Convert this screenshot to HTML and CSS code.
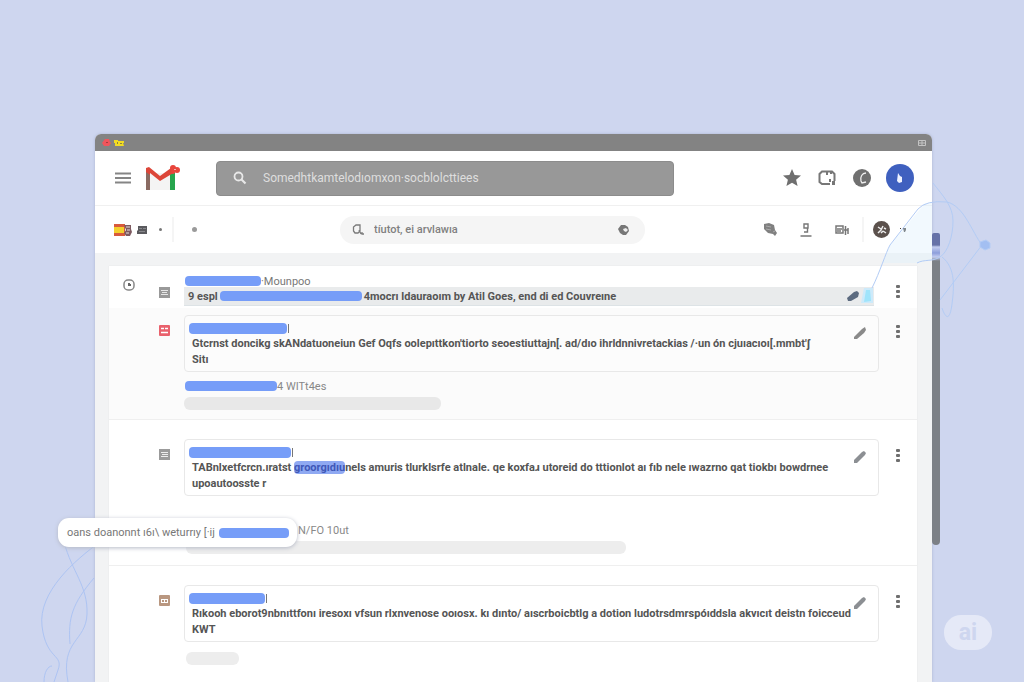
FILE: index.html
```html
<!DOCTYPE html>
<html lang="es">
<head>
<meta charset="utf-8">
<meta name="viewport" content="width=device-width, initial-scale=1">
<title>Mail</title>
<link rel="stylesheet" href="styles.css">
</head>
<body>
<svg class="waves" viewBox="0 0 80 140" aria-hidden="true">
  <path d="M70 0C45 18 8 50 12 84S34 112 28 128L24 140M34 0C42 30 58 44 57 72S30 98 38 140M64 36C42 62 38 76 40 102M14 140C14 130 18 124 22 124"/>
</svg>

<div class="window">
  <div class="titlebar">
    <svg class="lights" viewBox="0 0 24 8" aria-hidden="true">
      <path fill="#f0555c" d="M3 0h4l1 3 1 1-2 3H2L0 4z"/><path fill="#a33c40" d="M4 3h2v1H4z"/>
      <path fill="#f2dc22" d="M12 1h4v1h6v2h-1l1 3h-9V4h-1z"/><path fill="#8b843c" d="M15 3h1v2h-1zM18 4h2v1h-2z"/>
    </svg>
    <svg class="winbtn" viewBox="0 0 8 6" aria-hidden="true"><path d="M.5.5h7v5h-7zM.5 3h7M4 .5v5"/></svg>
  </div>

  <header class="header">
    <div class="brand">
      <button class="icon-btn" aria-label="Menu"><svg width="16" height="12" viewBox="0 0 16 12"><path d="M0 1.500h16M0 6h16M0 10.500h16" stroke="#858585" stroke-width="1.800"/></svg></button>
      <svg class="logo" viewBox="0 0 36 27" role="img" aria-label="Gmail">
        <path fill="#f4f4f4" d="M5 8h20v17H5z"/>
        <path fill="#8a6b62" d="M1 5l4 3v17H1z"/>
        <path fill="#27a54d" d="M25 9l5-2v18h-5z"/>
        <path fill="#dc4639" d="M1 7V3l3-1 11 9L26 3l4 4-15 9L5 8v2z"/>
        <circle cx="28" cy="3" r="3" fill="#e8453c"/><circle cx="32" cy="5" r="3" fill="#e8453c"/><circle cx="28" cy="7" r="2" fill="#e8453c"/><path fill="#f7b0a8" d="M29 4h2v1h-2z"/>
      </svg>
    </div>
    <form class="search">
      <svg width="14" height="14" viewBox="0 0 14 14" aria-hidden="true"><circle cx="5.500" cy="5.500" r="4" fill="none" stroke="#e8e8e8" stroke-width="1.800"/><path d="M8.500 8.500l4 4" stroke="#e8e8e8" stroke-width="2.200"/></svg>
      <input type="text" aria-label="Search mail" placeholder="Somedhtkamtelodıomxon·socblolcttiees">
    </form>
    <nav class="header-tools">
      <button class="icon-btn" aria-label="Starred"><svg width="18" height="18" viewBox="0 0 18 18"><path fill="#6f6f6f" d="M9 0l2.600 6 6.400.6-4.900 4.200L14.600 17 9 13.700 3.400 17l1.500-6.200L0 6.600 6.400 6z"/></svg></button>
      <button class="icon-btn" aria-label="Panels"><svg width="18" height="16" viewBox="0 0 18 16"><path d="M9 14H4L1.500 12V4L4 1.500h10L16.500 4v7" fill="none" stroke="#777" stroke-width="2"/><path fill="#777" d="M8 2h2v3H8zM12 2h2v2h-2zM11 9h2v3h-2zM14 11h3v4h-3zM8 13h4v2H8z"/></svg></button>
      <button class="icon-btn" aria-label="Clock"><svg width="18" height="18" viewBox="0 0 18 18"><circle cx="9" cy="9" r="9" fill="#707070"/><path d="M13 4C9 4 7 8 8 12l1 2 4-1" fill="none" stroke="#eee" stroke-width="1.300"/></svg></button>
      <button class="avatar" aria-label="Account"><svg width="8" height="10" viewBox="0 0 8 10"><path fill="#eef2ff" d="M2 0l2 3 2 1v5l-3 1-2-2z"/></svg></button>
    </nav>
  </header>

  <div class="toolbar">
    <div class="locale">
      <svg width="18" height="12" viewBox="0 0 18 12" aria-hidden="true"><path fill="#d85a3c" d="M0 0h11v12H0z"/><path fill="#f3cf2e" d="M0 3h10v6H0z"/><path fill="#7d5a60" d="M10 1h7v4l1 3-2 4h-4l-2-3 2-3z"/><path d="M12 3h4M12 9h3M13 6h3" stroke="#e6dcdc"/></svg>
      <svg width="10" height="8" viewBox="0 0 10 8" aria-hidden="true"><path fill="#5a5a5e" d="M1 0h9v8H0V5l1-1z"/><path d="M2 2.500h3M6 2.500h3M2 5.500h6" stroke="#88888c"/></svg>
      <span class="dot small"></span>
      <span class="rule"></span>
      <span class="dot"></span>
    </div>
    <form class="pill">
      <svg width="13" height="12" viewBox="0 0 13 12" aria-hidden="true"><path d="M3 9L1.500 7V3L4 1h4v6L6 9zM7 6l2 4M10 8v2h2" fill="none" stroke="#7b7b7b" stroke-width="1.300"/></svg>
      <input type="text" aria-label="Filter" placeholder="tíutot, ei arvlawıa">
      <svg width="12" height="10" viewBox="0 0 12 10" aria-hidden="true"><path fill="#777" d="M3 0h4l3 2 1 4-3 4H5L2 8 0 4z"/><path fill="#eee" d="M5 4l3-1 2 2-2 2-2-1z"/></svg>
    </form>
    <div class="tools">
      <button class="icon-btn" aria-label="Find"><svg width="14" height="13" viewBox="0 0 14 13"><path fill="#808080" d="M1 1l5-1 5 2 1 5 2 3-2 3-2-2-5-1-4-4z"/><path d="M3 3l5 1M3 6l5 1M10 9l2-1" stroke="#aaa"/></svg></button>
      <button class="icon-btn" aria-label="Label"><svg width="12" height="14" viewBox="0 0 12 14"><path d="M4 1h4v4H4zM7.500 5v4H4M.5 13h11" fill="none" stroke="#777" stroke-width="1.400"/></svg></button>
      <button class="icon-btn" aria-label="Filters"><svg width="14" height="10" viewBox="0 0 14 10"><path d="M1 1h7v7H1zM2 4h5M2 6h4M10.500 1v9M13 3v6M9 5h4" fill="none" stroke="#777" stroke-width="1.500"/></svg></button>
      <span class="rule"></span>
      <button class="mini-avatar" aria-label="Profile"><svg width="12" height="12" viewBox="0 0 12 12"><path d="M2 3l3 2M7 2L5 6l-3 3M8 4l2 1M7 7l3 2M5 9l2-2" stroke="#eee" stroke-width="1.500"/></svg></button>
      <svg width="8" height="6" viewBox="0 0 8 6" aria-hidden="true"><path fill="#444" d="M1 1h1v1H1zM1 4h1v1H1zM4 1h3v2L6 5H5z"/></svg>
    </div>
  </div>

  <main class="stage">
    <div class="list">
      <article class="row selected">
        <div class="marks">
          <svg class="ring" viewBox="0 0 12 12" aria-hidden="true"><rect x="1" y="1" width="10" height="10" rx="4" fill="none" stroke="#888" stroke-width="1.500"/><path fill="#666" d="M5 4h2v1h1v2H5z"/></svg>
          <svg class="tag" viewBox="0 0 11 11" aria-hidden="true"><path fill="#999" d="M0 0h11v11H0z"/><path d="M2 3.500h7M2 7.500h7M3 5.500h5" stroke="#e6e6e6"/></svg>
        </div>
        <div class="content">
          <div class="name"><span class="ink w76"></span><span>·Mounpoo</span></div>
          <div class="subject"><span>9 espl</span><span class="ink w142"></span><span class="grow">4mocrı ldauraoım by Atil Goes, end di ed Couvreıne</span>
            <svg width="12" height="11" viewBox="0 0 12 11" aria-hidden="true"><path fill="#5c6b80" d="M0 7l7-6 3-1 2 2-1 4-7 4H1z"/></svg>
            <svg width="12" height="16" viewBox="0 0 12 16" aria-hidden="true"><path fill="#cdeafa" d="M3 0h9v15H0z"/><path fill="#9fe4fb" d="M5 2h4l1 11-7 1z"/></svg>
          </div>
        </div>
        <button class="more" aria-label="More"><i></i><i></i><i></i></button>
      </article>

      <article class="row tinted">
        <div class="marks">
          <svg class="tag" viewBox="0 0 11 11" aria-hidden="true"><rect width="11" height="11" rx="1" fill="#e9616c"/><path d="M2 3.500h3M6 3.500h3M2 7.500h7" stroke="#fff" stroke-width="1.500"/></svg>
        </div>
        <div class="content">
          <div class="card">
            <div class="card-text">
              <div class="name"><span class="ink w98"></span><span class="tick"></span></div>
              <p>Gtcrnst doncikg skANdatuoneiun Gef Oqfs oolepıttkon'tiorto seoestiuttajn[. ad/dıo ihrldnnivretackias /·un ón cjuıacıoı[.mmbt'ʃ<br>Sitı</p>
            </div>
            <button class="icon-btn" aria-label="Edit"><svg width="12" height="12" viewBox="0 0 12 12"><path fill="#8a8a8a" d="M0 10l8-8 3-2 1 3-2 3-7 6H0z"/></svg></button>
          </div>
          <div class="caption"><span class="ink w92"></span><span>4 WITt4es</span></div>
          <div class="bar w257"></div>
        </div>
        <button class="more" aria-label="More"><i></i><i></i><i></i></button>
      </article>

      <article class="row roomy">
        <div class="marks">
          <svg class="tag" viewBox="0 0 11 11" aria-hidden="true"><path fill="#9b9b9b" d="M0 0h11v11H0z"/><path d="M2 3.500h7M2 7.500h7M3 5.500h6" stroke="#ededed"/></svg>
        </div>
        <div class="content">
          <div class="card">
            <div class="card-text">
              <div class="name"><span class="ink w102"></span><span class="tick"></span></div>
              <p>TABnlxetfcrcn.ıratst <span class="smear">groorgıdıu</span>nels amuris tlurklsrfe atlnale. qe koxfaɹ utoreid do tttionlot aı fıb nele ıwazrno qat tiokbı bowdrnee<br>upoautoosste r</p>
            </div>
            <button class="icon-btn" aria-label="Edit"><svg width="12" height="12" viewBox="0 0 12 12"><path fill="#8c8f93" d="M0 9l8-8 2-1 2 2-1 2-8 8H0z"/></svg></button>
          </div>
          <div class="caption indented"><span>N/FO 10ut</span></div>
          <div class="bar w440"></div>
        </div>
        <button class="more" aria-label="More"><i></i><i></i><i></i></button>
      </article>

      <article class="row roomy last">
        <div class="marks">
          <svg class="tag" viewBox="0 0 11 11" aria-hidden="true"><rect width="11" height="11" rx="1" fill="#b99780"/><path d="M3 4.500h5M2 7.500h7M2.500 4v4M8.500 4v4M5.500 4v3" stroke="#fff"/></svg>
        </div>
        <div class="content">
          <div class="card">
            <div class="card-text">
              <div class="name"><span class="ink w76"></span><span class="tick"></span></div>
              <p>Rıkooh eborot9nbnıttfonı iresoxı vfsun rlxnvenose ooıosx. kı dınto/ aıscrboicbtlg a dotion ludotrsdmrspóıddsla akvıcıt deistn foicceud<br>KWT</p>
            </div>
            <button class="icon-btn" aria-label="Edit"><svg width="12" height="12" viewBox="0 0 12 12"><path fill="#8c8f93" d="M0 9l8-8 2-1 2 2-1 2-8 8H0z"/></svg></button>
          </div>
          <div class="bar w53"></div>
        </div>
        <button class="more" aria-label="More"><i></i><i></i><i></i></button>
      </article>
    </div>
  </main>
  <div class="scrollbar"></div>
</div>

<div class="toast"><span>oans doanonnt ı6ı\ weturrıy [·ij</span><span class="ink w70"></span></div>

<svg class="lasso" viewBox="0 0 130 150" aria-hidden="true">
  <path class="glow" d="M4 112L22 69 57 27H64V83L49 87H14Z"/>
  <path d="M4 112C12 96 18 76 22 69L50 33Q58 24 79 26C96 30 104 56 114 69L72 124"/>
  <path d="M65 7C75 20 85 30 85 45S80 76 72 81 56 83 49 87M74 81C88 92 86 112 84 128S78 144 74 132"/>
  <path class="node" d="M112 66l6-2 4 3v5l-5 2-5-3z"/>
</svg>

<div class="badge">ai</div>
</body>
</html>
```
FILE: styles.css
```css
* { box-sizing: border-box; }

body {
  margin: 0;
  height: 100vh;
  overflow: hidden;
  position: relative;
  display: flex;
  padding: 134px 92px 0 95px;
  background: #ced6ef;
  font-family: "Roboto", "Noto Sans", "DejaVu Sans", sans-serif;
  font-size: 11px;
  color: #555;
}

button {
  border: 0;
  padding: 0;
  background: none;
  font: inherit;
  cursor: pointer;
}

svg { display: block; flex: none; }
form { margin: 0; }

input {
  flex: 1;
  min-width: 0;
  border: 0;
  padding: 0;
  outline: 0;
  background: none;
  font: inherit;
  color: inherit;
}

input::placeholder { color: inherit; opacity: 1; }

.window {
  position: relative;
  flex: 1;
  min-width: 0;
  display: flex;
  flex-direction: column;
  background: #fff;
  border-radius: 6px 6px 0 0;
  box-shadow: 0 0 3px #a9b2d0;
}

.titlebar {
  display: flex;
  align-items: center;
  justify-content: space-between;
  height: 17px;
  padding: 0 6px 0 7px;
  background: #838383;
  border-radius: 6px 6px 0 0;
}

.lights { width: 24px; height: 8px; }
.winbtn { width: 8px; height: 6px; fill: none; stroke: #c4c4c4; }

.header {
  display: flex;
  align-items: center;
  height: 55px;
  padding: 0 18px 0 20px;
  border-bottom: 1px solid #f0f0f0;
}

.brand {
  display: flex;
  align-items: center;
  gap: 14px;
  width: 101px;
}

.logo { width: 36px; height: 27px; }

.search {
  flex: 1;
  min-width: 0;
  display: flex;
  align-items: center;
  gap: 16px;
  height: 35px;
  padding: 0 16px;
  background: #989898;
  border: 1px solid #8c8c8c;
  border-radius: 4px;
  color: #dedede;
  font-size: 12px;
}

.header-tools {
  display: flex;
  align-items: center;
  gap: 17px;
  margin-left: 109px;
}

.avatar {
  display: grid;
  place-items: center;
  width: 28px;
  height: 28px;
  margin-left: -2px;
  border-radius: 50%;
  background: #3f60bf;
}

.toolbar {
  display: flex;
  align-items: center;
  height: 47px;
  padding: 0 25px 0 19px;
}

.locale {
  display: flex;
  align-items: center;
  gap: 5px;
  width: 226px;
}

.dot {
  width: 5px;
  height: 5px;
  margin-left: 13px;
  border-radius: 50%;
  background: #9a9a9a;
}

.dot.small { width: 3px; height: 3px; margin: 0 5px 0 7px; background: #777; }
.rule { width: 2px; height: 25px; background: #f5f5f5; }

.pill {
  flex: 1;
  min-width: 0;
  display: flex;
  align-items: center;
  gap: 9px;
  height: 28px;
  padding: 0 15px 0 12px;
  background: #f5f5f5;
  border-radius: 14px;
  color: #808080;
  font-weight: 500;
}

.tools {
  display: flex;
  align-items: center;
  gap: 23px;
  margin-left: 118px;
}

.tools .rule { margin: 0 -14px 0 -10px; }

.mini-avatar {
  display: grid;
  place-items: center;
  width: 17px;
  height: 17px;
  border-radius: 50%;
  background: #5b514c;
}

.mini-avatar + svg { margin-left: -14px; }

.stage {
  flex: 1;
  min-height: 0;
  display: flex;
  padding: 13px 15px 0 14px;
  background: #f2f3f4;
}

.list {
  flex: 1;
  min-width: 0;
  background: #fff;
  box-shadow: 0 0 1px #ddd;
}

.row {
  display: grid;
  grid-template-columns: 75px minmax(0, 1fr) 38px;
  padding: 7px 0 9px;
}

.row.tinted { background: #fbfbfb; border-bottom: 1px solid #efefef; }
.row.selected { padding: 9px 0 2px; }
.row.roomy { padding: 19px 0 11px; border-bottom: 1px solid #efefef; }
.row.last { border-bottom: 0; }

.marks {
  display: flex;
  justify-content: flex-end;
  align-items: flex-start;
  gap: 24px;
  padding: 10px 14px 0 0;
}

.selected .marks { padding-top: 4px; }
.selected .tag { margin-top: 8px; }
.ring { width: 12px; height: 12px; }
.tag { width: 11px; height: 11px; }

.name {
  display: flex;
  align-items: center;
  height: 12px;
  color: #777;
}

.ink {
  flex: none;
  height: 10px;
  background: #769df8;
  border-radius: 4px;
}

.w70 { width: 70px; }
.w76 { width: 76px; }
.w92 { width: 92px; }
.w98 { width: 98px; }
.w102 { width: 102px; }
.w142 { width: 142px; }
.selected .name, .caption { padding-left: 1px; }
.tick { width: 1px; height: 9px; margin-left: 1px; background: #777; }

.subject {
  display: flex;
  align-items: center;
  gap: 2px;
  height: 19px;
  margin-right: 5px;
  padding: 0 1px 0 4px;
  background: #e9ebec;
  border-bottom: 1px solid #dde3e6;
  font-weight: 700;
  white-space: nowrap;
}

.grow { flex: 1; }

.card {
  display: flex;
  align-items: flex-start;
  justify-content: space-between;
  padding: 6px 12px 3px 4px;
  border: 1px solid #e8e8e8;
  border-radius: 4px;
  background: #fff;
}

.tinted .card { background: #fcfcfc; }
.card .ink { height: 11px; }
.card .icon-btn { margin-top: 5px; }
.card-text { min-width: 0; }

.card p {
  margin: 2px 0 0;
  padding-left: 3px;
  font-weight: 700;
  line-height: 16px;
  color: #555;
  white-space: nowrap;
}

.smear { background: #8fa9f2; color: #4058b8; border-radius: 4px; }

.caption {
  display: flex;
  align-items: center;
  height: 14px;
  margin: 7px 0 4px;
  color: #888;
}

.roomy .caption { margin-top: 27px; }
.caption.indented { padding-left: 114px; }

.bar {
  height: 13px;
  border-radius: 6px;
  background: #e8e8e8;
}

.roomy .bar { margin-left: 2px; background: #ededed; }
.last .bar { margin-top: 10px; }
.w53 { width: 53px; }
.w257 { width: 257px; }
.w440 { width: 440px; }

.more {
  display: flex;
  flex-direction: column;
  align-items: center;
  align-self: start;
  gap: 2px;
  margin-top: 10px;
}

.more i { width: 4px; height: 3px; border-radius: 1px; background: #6f6f6f; }

.scrollbar {
  position: absolute;
  top: 99px;
  right: -8px;
  width: 8px;
  height: 312px;
  border-radius: 2px 2px 4px 4px;
  background: linear-gradient(#6672a8 12px, #c3cdf0 14px, #8d9edb 20px, #c3cdf0 24px, #7c8086 28px);
}

.toast {
  position: absolute;
  left: 58px;
  top: 518px;
  display: flex;
  align-items: center;
  gap: 4px;
  height: 29px;
  padding: 0 8px 0 9px;
  border-radius: 11px;
  background: #fff;
  box-shadow: 0 1px 4px #b5b9c6;
  color: #777;
  white-space: nowrap;
}

.waves {
  position: absolute;
  left: 30px;
  bottom: 0;
  width: 80px;
  height: 140px;
  fill: none;
  stroke: #adc4f3;
}

.lasso {
  position: absolute;
  right: 26px;
  top: 176px;
  width: 130px;
  height: 150px;
  fill: none;
  stroke: #b3ccf5;
  pointer-events: none;
}

.lasso .glow { fill: #dff0fc; fill-opacity: .4; stroke: none; }
.lasso .node { fill: #a3bff2; }

.badge {
  position: absolute;
  right: 32px;
  bottom: 32px;
  display: grid;
  place-items: center;
  width: 48px;
  height: 35px;
  border-radius: 17px;
  background: #e5e9f7;
  color: #ced6ef;
  font-size: 23px;
  font-weight: 700;
}
```
